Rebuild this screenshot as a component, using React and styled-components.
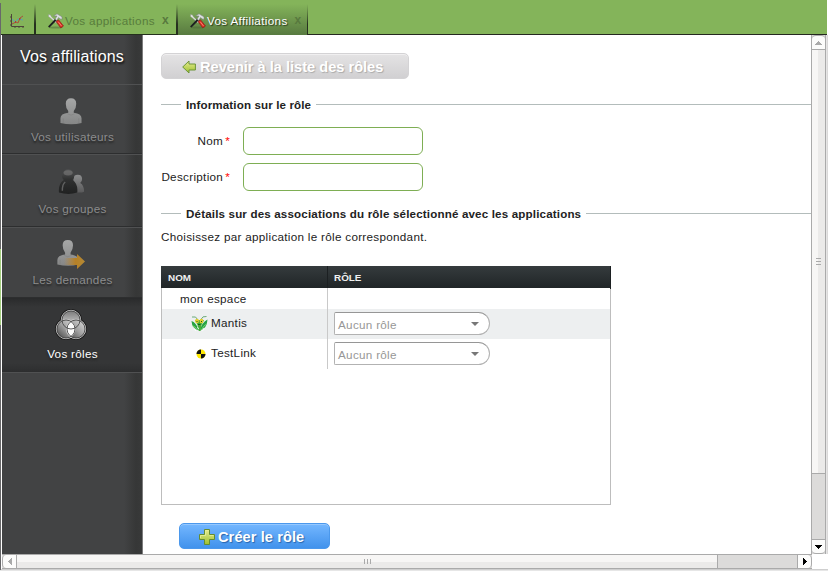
import React from "react";
import styled, { createGlobalStyle, css } from "styled-components";

const GlobalStyle = createGlobalStyle`
  * { box-sizing: border-box; }
  body { margin: 0; background: #fff; }
  svg { display: block; flex: none; }
`;

const Window = styled.div`
  width: 828px;
  height: 571px;
  overflow: hidden;
  display: flex;
  flex-direction: column;
  padding-left: 1px;
  background:
    linear-gradient(#84b45a 3px, #68686a 3px, #68686a 249px, #a5cf80 249px, #a5cf80 325px, #68686a 325px) 0 0 / 1px 100% no-repeat,
    #fff;
  color: #222;
  font: 11.7px/14px "Liberation Sans", Arial, sans-serif;
  border-bottom: 1px solid #e6e6e6;
`;

const TabBar = styled.nav`
  height: 35px;
  flex: none;
  display: flex;
  align-items: flex-end;
  margin-right: 1px;
  background: #84b45a;
`;

const Tab = styled.div`
  width: ${(p) => p.$width}px;
  height: 31px;
  display: flex;
  align-items: center;
  gap: 1px;
  padding: 3px 0 0 ${(p) => p.$inset}px;
  white-space: nowrap;
  letter-spacing: 0.34px;
  color: #587c3c;
  border-bottom: 1px solid #24301c;
  ${(p) => p.$active && css`
    color: #fff;
    border-bottom: 0;
    background: linear-gradient(#84b45a, #587a40);
    text-shadow: 1px 1px 1px #29391f;
  `}
`;

const TabDivider = styled.div`
  width: ${(p) => p.$width || 1}px;
  height: 31px;
  background: linear-gradient(#84b45a, #26301f 65%);
`;

const TabRest = styled.div`
  flex: 1;
  height: 31px;
  border-bottom: 1px solid #24281f;
`;

const TabClose = styled.span`
  margin: -2px 0 0 6px;
  font-size: 12px;
  font-weight: bold;
  line-height: 12px;
  color: #58793e;
  text-shadow: none;
`;

const Body = styled.div`
  height: 519px;
  flex: none;
  display: flex;
  padding-left: 1px;
`;

const Sidebar = styled.aside`
  width: 141px;
  flex: none;
  background: linear-gradient(90deg, #424344 122px, #363737 134px, #383939);
  border-right: 1px solid #7c7c7c;
`;

const SidebarTitle = styled.h1`
  height: 49px;
  margin: 0;
  padding: 12px 0 0 18px;
  color: #fff;
  font-size: 16px;
  font-weight: normal;
  line-height: 19px;
  letter-spacing: 0.12px;
  white-space: nowrap;
  text-shadow: 1px 2px 2px #111;
`;

const NavItem = styled.div`
  height: ${(p) => p.$height}px;
  display: flex;
  flex-direction: column;
  align-items: center;
  justify-content: flex-end;
  padding: 0 0 ${(p) => p.$bottom}px 1px;
  gap: ${(p) => p.$gap}px;
  border-top: 1px solid #505152;
  border-bottom: 1px solid #2d2e2f;
  color: #8c8d8e;
  letter-spacing: 0.29px;
  text-shadow: 0 2px 2px #222;
  svg { margin-right: 3px; }
  ${(p) => p.$active && css`
    color: #fff;
    background: linear-gradient(#2b2c2d, #353637 8px, #353637 64px, #2e2f30);
    border-top-color: #2a2b2c;
  `}
`;

const SidebarFoot = styled.div`
  border-top: 1px solid #505152;
`;

const Content = styled.main`
  width: 668px;
  flex: none;
  overflow: hidden;
  padding: 18px 0 0 18px;
`;

const Button = styled.button`
  width: ${(p) => p.$width}px;
  height: 26px;
  display: flex;
  align-items: center;
  gap: ${(p) => p.$gap}px;
  padding: 1px 0 0 ${(p) => p.$inset}px;
  margin: 0;
  border: 1px solid #d4d3d5;
  border-radius: 5px;
  color: #fff;
  font: bold 14.6px/18px "Liberation Sans", Arial, sans-serif;
  white-space: nowrap;
  background: linear-gradient(#e4e3e4, #d1d0d2);
  box-shadow: inset 0 1px 0 #f0eff0;
  text-shadow: 1px 1px 1px #aaa;
  ${(p) => p.$primary && css`
    margin: 18px 0 0 18px;
    letter-spacing: 0.08px;
    border-color: #4b98ec;
    background: linear-gradient(#74b7ff, #4192ec);
    box-shadow: inset 0 1px 0 #95c8ff;
    text-shadow: 1px 1px 1px #2765ac;
  `}
`;

const SectionTitle = styled.h2`
  display: flex;
  align-items: center;
  height: 14px;
  margin: ${(p) => p.$top}px 0 0;
  font-size: 11.6px;
  letter-spacing: ${(p) => p.$tracking}px;
  line-height: 14px;
  white-space: nowrap;
  gap: 5px;
  &::before, &::after { content: ""; height: 1px; margin-bottom: 1px; background: #b3bcbb; }
  &::before { width: 20px; }
  &::after { flex: 1; }
`;

const Fields = styled.div`
  display: grid;
  grid-template-columns: 69px 180px;
  column-gap: 13px;
  row-gap: 8px;
  margin-top: 15px;
  align-items: center;
`;

const Label = styled.label`
  text-align: right;
  white-space: nowrap;
  letter-spacing: 0.3px;
`;

const Required = styled.span`
  margin-left: 2px;
  color: #f00;
`;

const Input = styled.input`
  width: 180px;
  height: 28px;
  border: 1px solid #7eae54;
  border-radius: 6px;
  background: #fff;
`;

const Hint = styled.p`
  margin: 9px 0 0;
  letter-spacing: 0.29px;
`;

const Table = styled.div`
  width: 450px;
  height: 239px;
  margin-top: 22px;
  border: 1px solid #bdbdbd;
  border-top: 0;
`;

const TableHead = styled.div`
  height: 22px;
  margin: 0 -1px;
  display: grid;
  grid-template-columns: 167px 1fr;
  background: linear-gradient(#353b3d, #202527);
  color: #f0f0f0;
  font-size: 9.9px;
  font-weight: bold;
  line-height: 23px;
`;

const HeadCell = styled.div`
  padding-left: ${(p) => p.$inset}px;
  border-right: 1px solid #1c2022;
`;

const Row = styled.div`
  height: ${(p) => p.$height}px;
  display: grid;
  grid-template-columns: 166px 1fr;
  background: ${(p) => (p.$shaded ? "#edeff0" : "#fff")};
`;

const NameCell = styled.div`
  display: flex;
  align-items: flex-start;
  gap: 3px;
  padding: ${(p) => p.$top}px 0 0 ${(p) => p.$indent}px;
  letter-spacing: 0.29px;
  border-right: 1px solid #c9c9c9;
`;

const RoleCell = styled.div`
  padding: 3px 0 0 6px;
`;

const Select = styled.div`
  width: 156px;
  height: 23px;
  display: flex;
  align-items: center;
  justify-content: space-between;
  padding: 3px 10px 0 3px;
  border: 1px solid #b2b2b2;
  border-top-color: #969696;
  border-radius: 2px 12px 12px 2px;
  background: #fff;
  color: #979797;
  letter-spacing: 0.29px;
  svg { margin-bottom: 3px; }
`;

const VScroll = styled.div`
  width: 15px;
  flex: none;
  display: flex;
  flex-direction: column;
  border: solid #aaa;
  border-width: 0 1px;
  background: #dcdbda;
`;

const Arrow = styled.div`
  flex: none;
  width: ${(p) => p.$w}px;
  height: ${(p) => p.$h}px;
  display: flex;
  align-items: center;
  justify-content: center;
  background: #fcfcfb;
  border: 0 solid #aaa;
  border-width: ${(p) => p.$edges};
  border-radius: ${(p) => p.$round};
`;

const Thumb = styled.div`
  height: ${(p) => p.$h}px;
  width: ${(p) => p.$w}px;
  flex: none;
  display: flex;
  align-items: center;
  justify-content: center;
  background: linear-gradient(${(p) => p.$dir}, #f7f6f5 50%, #ebeae9 50%);
`;

const VFill = styled.div`
  flex: 1;
  border: solid #aaa;
  border-width: 1px 0;
`;

const HFill = styled.div`
  flex: 1;
  border: solid #aaa;
  border-width: 0 1px;
`;

const RightEdge = styled.div`
  width: 2px;
  background: linear-gradient(90deg, #ecebeb, #d4d3d3);
`;

const HScroll = styled.div`
  width: 810px;
  height: 15px;
  flex: none;
  display: flex;
  margin-left: 1px;
  border: solid #aaa;
  border-width: 1px 0;
  background: #dcdbda;
`;

const BottomEdge = styled.div`
  height: 1px;
  background: #cfcfcf;
`;

const ChartIcon = () => (
  <svg width="16" height="16" viewBox="0 0 16 16" fill="none">
    <path d="M2.500 1v12.500H15M1 4h1.500M1 8h1.500M1 12h1.500M6 13.500V15M10 13.500V15M14 13.500V15" stroke="#4f453b" />
    <path d="M3 6l3 3 3-3 5 1" stroke="#58a1b4" />
    <path d="M3 11l4-2 2 1 2-5 3-2" stroke="#a8503c" />
    <path d="M6 8h1v2H6zM10 5h1.500v1.500H10z" fill="#b23d31" />
  </svg>
);

const ToolsIcon = () => (
  <svg width="17" height="16" viewBox="0 0 17 16">
    <ellipse cx="8.500" cy="14.500" rx="7" ry="1" fill="#4c6735" opacity=".5" />
    <path d="M1.500 1.500l2 .5 1 2L10 9 9 10 3.500 5l-2-1.500z" fill="#e8e9e8" stroke="#8d958a" strokeWidth=".5" />
    <path d="M1 13.500L8.500 5.500l1.500 1.500-7.500 7.500z" fill="#1c2020" />
    <path d="M6.500 3L10 .8l5 3V6.500l-1.800-.5-1.500-1.500L9.500 7.500 8 6l2-3z" fill="#dde1e1" stroke="#788078" strokeWidth=".6" />
    <path d="M9 8.500l2.500-1.700 5 6.200-2.700 2z" fill="#d82f22" stroke="#861c16" strokeWidth=".6" />
    <path d="M11.300 8.800l3.200 4.200" stroke="#ff9a86" strokeWidth=".8" />
  </svg>
);

const PersonShape = () => (
  <>
    <path d="M1.500 28v-5q0-5 8.500-6v-2q-2.700-3-2.700-8 0-6 5.700-6t5.700 6q0 5-2.700 8v2q8.500 1 8.500 6v5q-11 3-23 0z" fill="url(#silver)" />
    <path d="M9 18q4 3 8 0M4.500 23v5M21.500 23v5" fill="none" stroke="#777" opacity=".45" />
  </>
);

const UserIcon = () => (
  <svg width="22" height="28" viewBox="1 0 24 30">
    <defs><linearGradient id="silver" x2="0" y2="1"><stop stopColor="#a6a7a7" /><stop offset="1" stopColor="#858686" /></linearGradient></defs>
    <PersonShape />
  </svg>
);

const GroupIcon = () => (
  <svg width="27" height="26" viewBox="0 0 28 26">
    <defs>
      <linearGradient id="coal" x2="0" y2="1"><stop stopColor="#555657" /><stop offset=".4" stopColor="#303131" /><stop offset="1" stopColor="#202121" /></linearGradient>
      <linearGradient id="ash" x2="0" y2="1"><stop stopColor="#8c8d8e" /><stop offset="1" stopColor="#59595a" /></linearGradient>
    </defs>
    <path d="M16 10q0-4.500 4.500-4.500T25 10q0 3-2 4 4 2 4 9-4 2-10 0z" fill="url(#ash)" />
    <path d="M1 24q-1-9 5-13-3-3-1-7 1-4 5.500-4T16 4q2 4-1 7 6 4 5 13-9 3-19 0z" fill="url(#coal)" />
    <ellipse cx="10.500" cy="3.500" rx="4.700" ry="2.700" fill="#777" opacity=".65" />
    <path d="M4.500 22q0-7 3-9" fill="none" stroke="#777" strokeWidth="1.500" opacity=".7" />
  </svg>
);

const RequestIcon = () => (
  <svg width="28" height="30" viewBox="0 0 28 30">
    <defs><linearGradient id="amber"><stop stopColor="#bf872d" stopOpacity="0" /><stop offset=".55" stopColor="#b58027" /><stop offset="1" stopColor="#b58a35" /></linearGradient></defs>
    <g transform="translate(-1 0) scale(.91)"><PersonShape /></g>
    <path d="M7 19h13v-4l8 7.500-8 7.500v-4H7z" fill="url(#amber)" />
  </svg>
);

const RolesIcon = () => (
  <svg width="32" height="32" viewBox="0 0 32 32">
    <defs>
      <linearGradient id="disc" x1="1" y1="0" x2="0" y2="1"><stop stopColor="#e4e4e4" /><stop offset=".5" stopColor="#a0a0a0" /><stop offset="1" stopColor="#3c3c3c" /></linearGradient>
      <linearGradient id="discTop" x2="0" y2="1"><stop stopColor="#777" /><stop offset="1" stopColor="#e8e8e8" /></linearGradient>
    </defs>
    <g stroke="#1c1c1c" strokeWidth="2.600"><circle cx="16" cy="11" r="9.700" /><circle cx="11" cy="20" r="9.700" /><circle cx="21" cy="20" r="9.700" /></g>
    <g stroke="#c8c8c8"><circle cx="16" cy="11" r="9.700" fill="url(#discTop)" /><circle cx="11" cy="20" r="9.700" fill="url(#disc)" /><circle cx="21" cy="20" r="9.700" fill="url(#disc)" /></g>
    <path d="M16 12q-4.500 3.500-4.500 8t4.500 8.500q4.500-4 4.500-8.500T16 12z" fill="#fafafa" />
    <g fill="none" stroke="#484848" strokeWidth=".9"><circle cx="16" cy="11" r="9" /><circle cx="11" cy="20" r="9" /><circle cx="21" cy="20" r="9" /></g>
  </svg>
);

const BackIcon = () => (
  <svg width="14" height="14" viewBox="0 0 14 14">
    <defs><linearGradient id="leaf" x2="0" y2="1"><stop stopColor="#e7ed92" /><stop offset="1" stopColor="#9ec02f" /></linearGradient></defs>
    <path d="M.7 7L7 1v3h6.400v6H7v3z" fill="url(#leaf)" stroke="#6c9439" strokeLinejoin="round" />
  </svg>
);

const PlusIcon = () => (
  <svg width="16" height="16" viewBox="0 0 16 16">
    <path d="M5.500.5h5v5h5v5h-5v5h-5v-5h-5v-5h5z" fill="url(#leaf)" stroke="#648d32" />
    <path d="M6.500 6.500v-5h3M1.500 9v-2.500h5M10.500 6.500h4" fill="none" stroke="#e6f19b" opacity=".8" />
  </svg>
);

const MantisIcon = () => (
  <svg width="17" height="17" viewBox="0 0 17 17">
    <path d="M.5 6Q5 7 8 15.500 1 14 .5 6zM16.500 4.500Q11 7 9 15.500q7-2 7.500-11z" fill="#26a443" />
    <path d="M1 10.500q3.500 1 5.500 4.500M15.500 9q-3.500 2-5 6" stroke="#8fdc7c" fill="none" strokeWidth=".8" />
    <path d="M4 5h9l-2.500 5-1 6H8L6.500 10z" fill="#44ad35" />
    <path d="M1 2q4-1.500 6 3M15.500 1.500q-4-1-6 3.500" fill="none" stroke="#6bab78" />
    <ellipse cx="6" cy="6" rx="1.900" ry="2.300" fill="#e2cf2a" /><ellipse cx="10.500" cy="6" rx="1.900" ry="2.300" fill="#e2cf2a" />
    <path d="M5.500 6.500h1M10 6.500h1M7 9.500h2.500" stroke="#155e1e" />
    <path d="M3.500 14l1.500 2M13 13l-1.500 3M6.500 12l1 2" stroke="#fff" strokeWidth=".9" />
  </svg>
);

const TestLinkIcon = () => (
  <svg width="10" height="10" viewBox="0 0 10 10">
    <circle cx="5" cy="5" r="4.500" fill="#ffe900" />
    <path d="M5 5H.500A4.500 4.500 0 0 1 5 .500zM5 5h4.500A4.500 4.500 0 0 1 5 9.500z" fill="#111" />
  </svg>
);

const IconSlot = styled.span`
  flex: none;
  margin: ${(p) => p.$margin};
`;

const Caret = () => <svg width="8" height="4"><path d="M0 0h8L4 4z" fill="#777" /></svg>;
const UpArrow = () => <svg width="7" height="4" shapeRendering="crispEdges"><path d="M0 4h7L3.500 0z" fill="#aaa" /></svg>;
const DownArrow = () => <svg width="7" height="4" shapeRendering="crispEdges"><path d="M0 0h7L3.500 4z" fill="#000" /></svg>;
const LeftArrow = () => <svg width="4" height="7" shapeRendering="crispEdges"><path d="M4 0v7L0 3.500z" fill="#aaa" /></svg>;
const RightArrow = () => <svg width="4" height="7" shapeRendering="crispEdges"><path d="M0 0v7l4-3.500z" fill="#000" /></svg>;
const VGrip = () => <svg width="5" height="7" shapeRendering="crispEdges"><path d="M0 .5h5M0 3.500h5M0 6.500h5" stroke="#aaa" /></svg>;
const HGrip = () => <svg width="7" height="5" shapeRendering="crispEdges"><path d="M.5 0v5M3.500 0v5M6.500 0v5" stroke="#aaa" /></svg>;

function RoleSelect() {
  return <RoleCell><Select>Aucun rôle<Caret /></Select></RoleCell>;
}

export default function App() {
  return (
    <Window>
      <GlobalStyle />
      <TabBar>
        <Tab $width={33} $inset={8}><ChartIcon /></Tab>
        <TabDivider $width={2} />
        <Tab $width={140} $inset={11}><ToolsIcon /><span>Vos applications</span><TabClose>x</TabClose></Tab>
        <TabDivider $width={2} />
        <Tab $active $width={129} $inset={11}><ToolsIcon /><span>Vos Affiliations</span><TabClose>x</TabClose></Tab>
        <TabDivider />
        <TabRest />
      </TabBar>
      <Body>
        <Sidebar>
          <SidebarTitle>Vos affiliations</SidebarTitle>
          <NavItem $height={70} $bottom={9} $gap={5}><UserIcon />Vos utilisateurs</NavItem>
          <NavItem $height={73} $bottom={10} $gap={7}><GroupIcon />Vos groupes</NavItem>
          <NavItem $height={71} $bottom={10} $gap={4}><RequestIcon />Les demandes</NavItem>
          <NavItem $height={74} $bottom={10} $gap={6} $active><RolesIcon />Vos rôles</NavItem>
          <SidebarFoot />
        </Sidebar>
        <Content>
          <Button $width={248} $inset={20} $gap={4}><BackIcon />Revenir à la liste des rôles</Button>
          <SectionTitle $top={19} $tracking={0.12}>Information sur le rôle</SectionTitle>
          <Fields>
            <Label>Nom<Required>*</Required></Label><Input />
            <Label>Description<Required>*</Required></Label><Input />
          </Fields>
          <SectionTitle $top={16} $tracking={0.16}>Détails sur des associations du rôle sélectionné avec les applications</SectionTitle>
          <Hint>Choisissez par application le rôle correspondant.</Hint>
          <Table>
            <TableHead><HeadCell $inset={7}>NOM</HeadCell><HeadCell $inset={6}>RÔLE</HeadCell></TableHead>
            <Row $height={21}><NameCell $top={4} $indent={18}>mon espace</NameCell></Row>
            <Row $height={30} $shaded>
              <NameCell $top={7} $indent={29}><IconSlot $margin="-1px 0 0"><MantisIcon /></IconSlot>Mantis</NameCell>
              <RoleSelect />
            </Row>
            <Row $height={30}>
              <NameCell $top={7} $indent={34}><IconSlot $margin="3px 2px 0 0"><TestLinkIcon /></IconSlot>TestLink</NameCell>
              <RoleSelect />
            </Row>
          </Table>
          <Button $primary $width={151} $inset={19} $gap={3}><PlusIcon />Créer le rôle</Button>
        </Content>
        <VScroll>
          <Arrow $w={13} $h={15} $edges="1px 0" $round="4px 4px 0 0"><UpArrow /></Arrow>
          <Thumb $w={13} $h={423} $dir="90deg"><VGrip /></Thumb>
          <VFill />
          <Arrow $w={13} $h={14} $edges="0 0 1px" $round="0 0 4px 4px"><DownArrow /></Arrow>
        </VScroll>
        <RightEdge />
      </Body>
      <HScroll>
        <Arrow $w={15} $h={13} $edges="0 1px" $round="4px 0 0 4px"><LeftArrow /></Arrow>
        <Thumb $w={700} $h={13} $dir="180deg"><HGrip /></Thumb>
        <HFill />
        <Arrow $w={14} $h={13} $edges="0 1px 0 0" $round="0 4px 4px 0"><RightArrow /></Arrow>
      </HScroll>
      <BottomEdge />
    </Window>
  );
}
